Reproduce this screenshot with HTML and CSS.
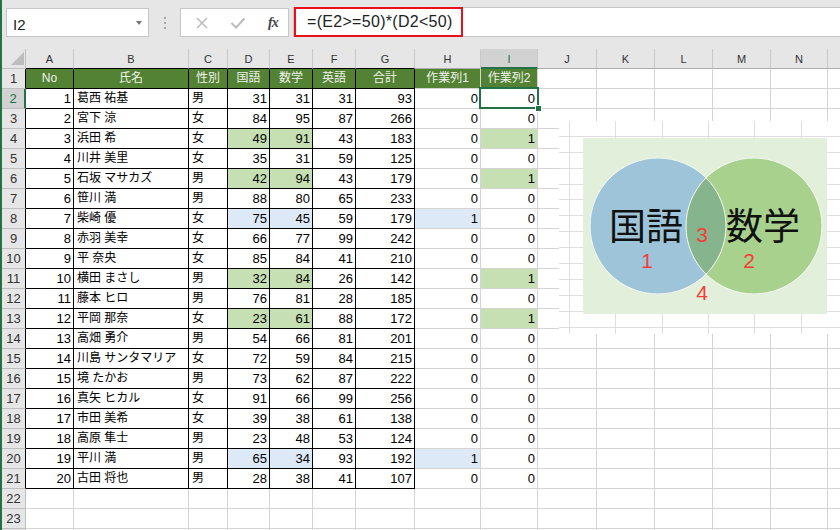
FILE: index.html
```html
<!DOCTYPE html>
<html lang="ja">
<head>
<meta charset="utf-8">
<title>Excel</title>
<link rel="stylesheet" href="styles.css">
</head>
<body>
<div class="app">
  <div class="topbar">
    <div class="namebox"><span class="ref">I2</span><span class="caret"></span></div>
    <div class="grip"><i></i><i></i><i></i></div>
    <div class="btns">
      <svg class="ico" width="14" height="14" viewBox="0 0 14 14"><path d="M2 2L12 12M12 2L2 12" stroke="#bdbdbd" stroke-width="1.6" fill="none"/></svg>
      <svg class="ico" width="16" height="14" viewBox="0 0 16 14"><path d="M1.5 7L6 11.5L14.5 2.5" stroke="#bdbdbd" stroke-width="2" fill="none"/></svg>
      <span class="fx">fx</span>
    </div>
    <div class="formula"><span class="expr">=(E2&gt;=50)*(D2&lt;50)</span></div>
  </div>

  <div class="sheet">
    <div class="row colhdr"><span class="corner"><b></b></span><span>A</span><span>B</span><span>C</span><span>D</span><span>E</span><span>F</span><span>G</span><span>H</span><span class="csel">I</span><span>J</span><span>K</span><span>L</span><span>M</span><span>N</span><span></span></div>
    <div class="row tbl hdr"><span>1</span><span>No</span><span>氏名</span><span>性別</span><span>国語</span><span>数学</span><span>英語</span><span>合計</span><span>作業列1</span><span>作業列2</span><span></span><span></span><span></span><span></span><span></span><span></span></div>
    <div class="row tbl"><span class="sel">2</span><span>1</span><span>葛西 祐基</span><span>男</span><span>31</span><span>31</span><span>31</span><span>93</span><span>0</span><span class="active">0</span><span></span><span></span><span></span><span></span><span></span><span></span></div>
    <div class="row tbl"><span>3</span><span>2</span><span>宮下 涼</span><span>女</span><span>84</span><span>95</span><span>87</span><span>266</span><span>0</span><span>0</span><span></span><span></span><span></span><span></span><span></span><span></span></div>
    <div class="row tbl"><span>4</span><span>3</span><span>浜田 希</span><span>女</span><span class="g">49</span><span class="g">91</span><span>43</span><span>183</span><span>0</span><span class="g">1</span><span></span><span></span><span></span><span></span><span></span><span></span></div>
    <div class="row tbl"><span>5</span><span>4</span><span>川井 美里</span><span>女</span><span>35</span><span>31</span><span>59</span><span>125</span><span>0</span><span>0</span><span></span><span></span><span></span><span></span><span></span><span></span></div>
    <div class="row tbl"><span>6</span><span>5</span><span>石坂 マサカズ</span><span>男</span><span class="g">42</span><span class="g">94</span><span>43</span><span>179</span><span>0</span><span class="g">1</span><span></span><span></span><span></span><span></span><span></span><span></span></div>
    <div class="row tbl"><span>7</span><span>6</span><span>笹川 満</span><span>男</span><span>88</span><span>80</span><span>65</span><span>233</span><span>0</span><span>0</span><span></span><span></span><span></span><span></span><span></span><span></span></div>
    <div class="row tbl"><span>8</span><span>7</span><span>柴崎 優</span><span>女</span><span class="b">75</span><span class="b">45</span><span>59</span><span>179</span><span class="b">1</span><span>0</span><span></span><span></span><span></span><span></span><span></span><span></span></div>
    <div class="row tbl"><span>9</span><span>8</span><span>赤羽 美幸</span><span>女</span><span>66</span><span>77</span><span>99</span><span>242</span><span>0</span><span>0</span><span></span><span></span><span></span><span></span><span></span><span></span></div>
    <div class="row tbl"><span>10</span><span>9</span><span>平 奈央</span><span>女</span><span>85</span><span>84</span><span>41</span><span>210</span><span>0</span><span>0</span><span></span><span></span><span></span><span></span><span></span><span></span></div>
    <div class="row tbl"><span>11</span><span>10</span><span>横田 まさし</span><span>男</span><span class="g">32</span><span class="g">84</span><span>26</span><span>142</span><span>0</span><span class="g">1</span><span></span><span></span><span></span><span></span><span></span><span></span></div>
    <div class="row tbl"><span>12</span><span>11</span><span>藤本 ヒロ</span><span>男</span><span>76</span><span>81</span><span>28</span><span>185</span><span>0</span><span>0</span><span></span><span></span><span></span><span></span><span></span><span></span></div>
    <div class="row tbl"><span>13</span><span>12</span><span>平岡 那奈</span><span>女</span><span class="g">23</span><span class="g">61</span><span>88</span><span>172</span><span>0</span><span class="g">1</span><span></span><span></span><span></span><span></span><span></span><span></span></div>
    <div class="row tbl"><span>14</span><span>13</span><span>高畑 勇介</span><span>男</span><span>54</span><span>66</span><span>81</span><span>201</span><span>0</span><span>0</span><span></span><span></span><span></span><span></span><span></span><span></span></div>
    <div class="row tbl"><span>15</span><span>14</span><span>川島 サンタマリア</span><span>女</span><span>72</span><span>59</span><span>84</span><span>215</span><span>0</span><span>0</span><span></span><span></span><span></span><span></span><span></span><span></span></div>
    <div class="row tbl"><span>16</span><span>15</span><span>境 たかお</span><span>男</span><span>73</span><span>62</span><span>87</span><span>222</span><span>0</span><span>0</span><span></span><span></span><span></span><span></span><span></span><span></span></div>
    <div class="row tbl"><span>17</span><span>16</span><span>真矢 ヒカル</span><span>女</span><span>91</span><span>66</span><span>99</span><span>256</span><span>0</span><span>0</span><span></span><span></span><span></span><span></span><span></span><span></span></div>
    <div class="row tbl"><span>18</span><span>17</span><span>市田 美希</span><span>女</span><span>39</span><span>38</span><span>61</span><span>138</span><span>0</span><span>0</span><span></span><span></span><span></span><span></span><span></span><span></span></div>
    <div class="row tbl"><span>19</span><span>18</span><span>高原 隼士</span><span>男</span><span>23</span><span>48</span><span>53</span><span>124</span><span>0</span><span>0</span><span></span><span></span><span></span><span></span><span></span><span></span></div>
    <div class="row tbl"><span>20</span><span>19</span><span>平川 満</span><span>男</span><span class="b">65</span><span class="b">34</span><span>93</span><span>192</span><span class="b">1</span><span>0</span><span></span><span></span><span></span><span></span><span></span><span></span></div>
    <div class="row tbl"><span>21</span><span>20</span><span>古田 将也</span><span>男</span><span>28</span><span>38</span><span>41</span><span>107</span><span>0</span><span>0</span><span></span><span></span><span></span><span></span><span></span><span></span></div>
    <div class="row"><span>22</span><span></span><span></span><span></span><span></span><span></span><span></span><span></span><span></span><span></span><span></span><span></span><span></span><span></span><span></span><span></span></div>
    <div class="row"><span>23</span><span></span><span></span><span></span><span></span><span></span><span></span><span></span><span></span><span></span><span></span><span></span><span></span><span></span><span></span><span></span></div>
    <div class="row"><span></span><span></span><span></span><span></span><span></span><span></span><span></span><span></span><span></span><span></span><span></span><span></span><span></span><span></span><span></span><span></span></div>
  </div>

  <div class="picture">
    <svg width="290" height="213" viewBox="0 0 290 213">
      <defs>
        <clipPath id="leftc"><circle cx="99" cy="105" r="68"/></clipPath>
      </defs>
      <rect width="290" height="213" fill="#ffffff"/>
      <g stroke="#dedede" stroke-width="1">
        <path d="M10.5 0V213M56.5 0V213M103.5 0V213M149.5 0V213M195.5 0V213M242.5 0V213M288.5 0V213"/>
        <path d="M0 15.5H290M0 31.5H290M0 47.5H290M0 63.5H290M0 78.5H290M0 94.5H290M0 110.5H290M0 126.5H290M0 142.5H290M0 158.5H290M0 174.5H290M0 190.5H290M0 206.5H290"/>
      </g>
      <rect x="24" y="17" width="244" height="176" fill="#e2efda"/>
      <circle cx="99" cy="105" r="68" fill="#9ec4da"/>
      <circle cx="195" cy="105" r="68" fill="#a9d18e"/>
      <circle cx="195" cy="105" r="68" fill="#86b48c" clip-path="url(#leftc)"/>
      <circle cx="99" cy="105" r="68" fill="none" stroke="#f4f8f2" stroke-width="1"/>
      <circle cx="195" cy="105" r="68" fill="none" stroke="#f4f8f2" stroke-width="1"/>
      <text class="big" x="87" y="103" text-anchor="middle" dominant-baseline="central">国語</text>
      <text class="big" x="204" y="103" text-anchor="middle" dominant-baseline="central">数学</text>
      <text class="num" x="88" y="147" text-anchor="middle">1</text>
      <text class="num" x="190" y="147" text-anchor="middle">2</text>
      <text class="num" x="143" y="121" text-anchor="middle">3</text>
      <text class="num" x="143" y="179" text-anchor="middle">4</text>
    </svg>
  </div>
</div>
</body>
</html>
```

FILE: styles.css
```css
html, body {
  margin: 0;
  padding: 0;
  overflow: hidden;
  background: #ffffff;
}

.app {
  position: relative;
  width: 840px;
  height: 530px;
  overflow: hidden;
  box-sizing: border-box;
  border-left: 2px solid #217346;
  background: #ffffff;
  font-family: "Liberation Sans", "Noto Sans CJK JP", sans-serif;
  color: #000;
}

/* ---------- formula bar ---------- */
.topbar {
  height: 49px;
  box-sizing: border-box;
  background: #e6e6e6;
  display: flex;
  align-items: flex-start;
  padding: 8px 0 0 4px;
}

.namebox {
  width: 143px;
  height: 29px;
  box-sizing: border-box;
  background: #ffffff;
  border: 1px solid #c6c6c6;
  display: flex;
  align-items: center;
  justify-content: space-between;
  padding: 3px 6px 0 6px;
}

.ref {
  font-size: 15px;
  color: #222;
}

.caret {
  width: 0;
  height: 0;
  border-left: 3.5px solid transparent;
  border-right: 3.5px solid transparent;
  border-top: 4px solid #777;
  margin-top: -2px;
}

.grip {
  width: 31px;
  height: 29px;
  display: flex;
  flex-direction: column;
  align-items: center;
  justify-content: center;
  gap: 3px;
}

.grip i {
  display: block;
  width: 2px;
  height: 2px;
  background: #a6a6a6;
}

.btns {
  width: 109px;
  height: 29px;
  box-sizing: border-box;
  background: #ffffff;
  border: 1px solid #c6c6c6;
  display: flex;
  align-items: center;
  padding-left: 14px;
}

.btns .ico:first-child {
  margin-right: 21px;
}

.btns .ico:nth-child(2) {
  margin-right: 22px;
}

.fx {
  font-family: "Liberation Serif", serif;
  font-style: italic;
  font-weight: bold;
  font-size: 14px;
  color: #444;
  letter-spacing: -1px;
}

.formula {
  flex: 1;
  height: 30px;
  margin-left: 4px;
  margin-top: -1px;
  box-sizing: border-box;
  background: #ffffff;
  border: 1px solid #c6c6c6;
  border-right: none;
  display: flex;
  align-items: stretch;
}

.expr {
  width: 169px;
  box-sizing: border-box;
  border: 2px solid #e8101a;
  margin: -1px 0 -1px 0;
  padding-left: 11px;
  display: flex;
  align-items: center;
  font-size: 16px;
  letter-spacing: 0.3px;
  color: #222;
  white-space: nowrap;
}

/* ---------- sheet ---------- */
.row {
  display: grid;
  grid-template-columns: 24px 48px 115px 39px 42px 43px 43px 59px 66px 57px 59px 58px 58px 58px 57px 40px;
  height: 20px;
}

.row > span {
  display: block;
  box-sizing: border-box;
  height: 20px;
  border-right: 1px solid #d4d4d4;
  border-bottom: 1px solid #d4d4d4;
  padding: 0 3px;
  font-size: 12px;
  line-height: 19px;
  white-space: nowrap;
  overflow: hidden;
}

.row > span:first-child {
  background: #e6e6e6;
  color: #333;
  text-align: center;
  font-size: 13px;
  padding: 0;
  border-right-color: #bfbfbf;
  border-bottom-color: #bfbfbf;
}

/* column header band */
.colhdr > span {
  background: #e6e6e6;
  color: #333;
  text-align: center;
  font-size: 11px;
  line-height: 20px;
  border-right-color: #c8c8c8;
  border-bottom-color: #ababab;
}

.colhdr > span:nth-child(n+2):nth-child(-n+8) {
  border-bottom-color: #000;
}

.colhdr > span.csel {
  background: #d2d2d2;
  color: #217346;
  border-bottom: 2px solid #217346;
}

.colhdr > span.corner {
  display: flex;
  align-items: flex-end;
  justify-content: flex-end;
  padding: 0 1px 3px 0;
}

.corner b {
  display: block;
  width: 13px;
  height: 13px;
  background: #bdbdbd;
  clip-path: polygon(100% 0, 100% 100%, 0 100%);
}

/* bordered table A1:G21 */
.tbl > span:nth-child(n+2):nth-child(-n+8) {
  border-right-color: #000;
  border-bottom-color: #000;
}

.tbl > span:first-child {
  border-right-color: #000;
}

.tbl > span:nth-child(2),
.tbl > span:nth-child(n+5):nth-child(-n+10) {
  text-align: right;
  padding-right: 2px;
  font-size: 13px;
}

.hdr > span:nth-child(n+2):nth-child(-n+10) {
  background: #548235;
  color: #eef3ea;
  text-align: center;
  font-size: 12px;
  padding: 0;
}

.tbl > span.sel {
  background: #d2d2d2;
  color: #217346;
  border-right: 2px solid #217346;
}

.row > span.g {
  background: #c6e0b4;
}

.row > span.b {
  background: #dde9f6;
}

.row > span.active {
  position: relative;
  overflow: visible;
}

.row > span.active::after {
  content: "";
  position: absolute;
  top: -2px;
  left: -2px;
  right: -2px;
  bottom: -1px;
  border: 2px solid #217346;
}

.row > span.active::before {
  content: "";
  position: absolute;
  right: -5px;
  bottom: -4px;
  width: 5px;
  height: 5px;
  background: #217346;
  border: 1px solid #ffffff;
  z-index: 2;
}

/* ---------- pasted picture ---------- */
.picture {
  position: absolute;
  left: 557px;
  top: 121px;
  width: 290px;
  height: 213px;
}

.picture svg {
  display: block;
}

.picture .big {
  font-family: "Noto Sans CJK JP", sans-serif;
  font-size: 37px;
  fill: #111;
}

.picture .num {
  font-family: "Liberation Sans", sans-serif;
  font-size: 21px;
  fill: #f53c3c;
}
```
